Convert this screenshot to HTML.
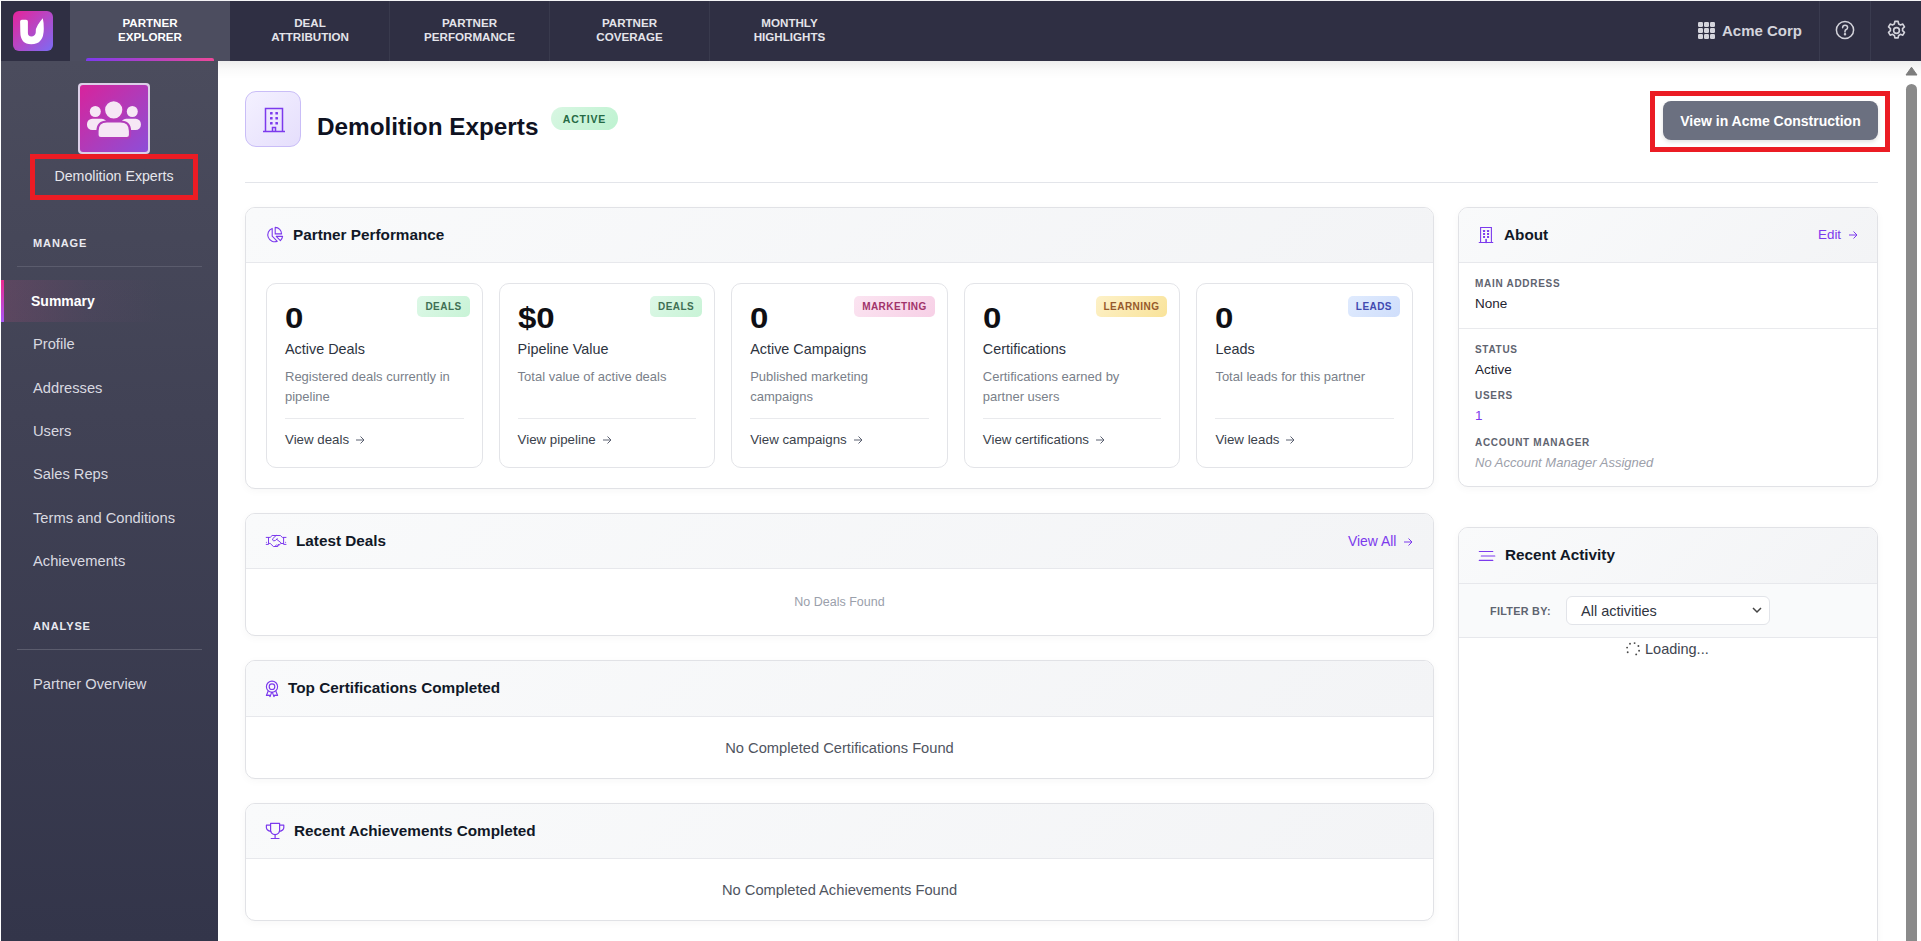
<!DOCTYPE html>
<html><head><meta charset="utf-8">
<style>
*{box-sizing:border-box;margin:0;padding:0}
html,body{width:1921px;height:941px;overflow:hidden;background:#fff;font-family:"Liberation Sans",sans-serif;position:relative}
.a{position:absolute}
.tab{position:absolute;top:1px;width:160px;height:60px;color:#e4e4ea;font-weight:bold;font-size:11.6px;line-height:14px;text-align:center;padding-top:15px}
.sep{border-left:1px solid #393a4d}
.nav{position:absolute;left:1px;width:217px;height:42px;color:#d9d9e0;font-size:14.7px;line-height:42px;padding-left:32px;white-space:nowrap}
.sect{position:absolute;left:33px;color:#eaeaf0;font-weight:bold;font-size:11px;letter-spacing:0.9px;line-height:14px}
.sdiv{position:absolute;left:17px;width:185px;height:1px;background:#5b5c6d}
.card{position:absolute;background:#fff;border:1px solid #e1e2e6;border-radius:10px;overflow:hidden;box-shadow:0 2px 8px rgba(0,0,0,0.035)}
.chd{position:absolute;left:0;top:0;right:0;height:55px;background:linear-gradient(135deg,#f9fafb 0%,#f3f4f6 100%);border-bottom:1px solid #e7e8ec}
.ct{position:absolute;top:0;line-height:54px;font-size:15.3px;font-weight:bold;color:#111827;white-space:nowrap}
.stat{position:absolute;top:75px;width:216.6px;height:185px;border:1px solid #e3e4e8;border-radius:10px;background:#fff}
.num{position:absolute;left:18px;top:17px;font-size:30px;font-weight:bold;color:#0f0f14;line-height:34px;transform:scaleX(1.1);transform-origin:0 0}
.bdg{position:absolute;right:12px;top:12px;height:21px;line-height:21px;padding:0 8px;border-radius:5px;font-size:10px;font-weight:bold;letter-spacing:0.45px}
.slab{position:absolute;left:18px;top:55px;font-size:14.4px;color:#2d3340;line-height:20px;white-space:nowrap}
.sdesc{position:absolute;left:18px;top:83px;width:190px;font-size:13px;color:#7a7f8a;line-height:20px}
.shr{position:absolute;left:18px;right:18px;top:134px;height:1px;background:#e9eaed}
.slink{position:absolute;left:18px;top:146px;font-size:13.3px;color:#3a3f4b;line-height:20px;white-space:nowrap}
.arr{display:inline-block;width:10px;height:10px;margin-left:6px;vertical-align:-1px}
.albl{position:absolute;left:16px;font-size:10px;font-weight:bold;letter-spacing:0.7px;color:#5f6470;line-height:14px}
.aval{position:absolute;left:16px;font-size:13.5px;color:#1f2430;line-height:18px}
.empty{position:absolute;left:0;right:0;text-align:center;white-space:nowrap}
</style></head><body>
<!-- page edge -->
<div class="a" style="left:0;top:0;width:1921px;height:1px;background:#f4f4f6"></div>
<!-- HEADER -->
<div class="a" style="left:1px;top:1px;width:1920px;height:60px;background:#2f2f43"></div>
<div class="a" style="left:13px;top:11px;width:40px;height:40px;border-radius:6px;background:linear-gradient(135deg,#e5239a 0%,#b548c6 50%,#7a6cf5 100%)">
  <svg width="40" height="40" viewBox="0 0 40 40"><path d="M7.1 10.5 q0 -1.8 1.8 -1.8 h4.2 q1.8 0 1.8 1.8 V22 q0 3.4 3.6 3.4 q3.2 0 4.2 -3.4 q-0.6 -4 2.2 -8.2 q2 -3.4 4.9 -6.6 q1 4 1 10.5 q0 15.6 -12.6 15.6 q-10.9 0 -10.9 -12.5 z" fill="#fff"/></svg>
</div>
<div class="tab" style="left:70px;background:#4c4d5f;color:#fff">PARTNER<br>EXPLORER</div>
<div class="tab" style="left:230px">DEAL<br>ATTRIBUTION</div>
<div class="tab sep" style="left:389px">PARTNER<br>PERFORMANCE</div>
<div class="tab sep" style="left:549px">PARTNER<br>COVERAGE</div>
<div class="tab sep" style="left:709px">MONTHLY<br>HIGHLIGHTS</div>
<div class="a" style="left:86px;top:58px;width:128px;height:3px;border-radius:2px 2px 0 0;background:linear-gradient(90deg,#7c3aed,#ec4899)"></div>
<!-- header right -->
<svg class="a" style="left:1698px;top:22px" width="17" height="17" viewBox="0 0 17 17" fill="#d4d4dc">
  <rect x="0" y="0" width="5" height="5" rx="1.2"/><rect x="6" y="0" width="5" height="5" rx="1.2"/><rect x="12" y="0" width="5" height="5" rx="1.2"/>
  <rect x="0" y="6" width="5" height="5" rx="1.2"/><rect x="6" y="6" width="5" height="5" rx="1.2"/><rect x="12" y="6" width="5" height="5" rx="1.2"/>
  <rect x="0" y="12" width="5" height="5" rx="1.2"/><rect x="6" y="12" width="5" height="5" rx="1.2"/><rect x="12" y="12" width="5" height="5" rx="1.2"/>
</svg>
<div class="a" style="left:1722px;top:22px;font-size:15px;font-weight:bold;color:#d4d4dc;line-height:18px">Acme Corp</div>
<div class="a" style="left:1819px;top:1px;width:1px;height:60px;background:#3a3b4f"></div>
<div class="a" style="left:1870px;top:1px;width:1px;height:60px;background:#3a3b4f"></div>
<svg class="a" style="left:1835px;top:20px" width="20" height="20" viewBox="0 0 20 20" fill="none" stroke="#d4d4dc" stroke-width="1.5">
  <circle cx="10" cy="10" r="8.6"/><path d="M7.6 7.8 q0 -2.6 2.5 -2.6 q2.5 0 2.5 2.3 q0 1.6 -1.7 2.3 q-0.9 0.4 -0.9 1.6 v0.5" stroke-linecap="round"/><circle cx="10" cy="14.3" r="0.5" fill="#d4d4dc"/>
</svg>
<svg class="a" style="left:1885px;top:19px" width="23" height="23" viewBox="0 0 24 24" fill="none" stroke="#d4d4dc" stroke-width="1.7" stroke-linejoin="round">
  <path d="M10.3 2.5h3.4l.5 2.6a7.5 7.5 0 0 1 1.9 1.1l2.5-.9 1.7 2.9-2 1.8a7.5 7.5 0 0 1 0 2.2l2 1.8-1.7 2.9-2.5-.9a7.5 7.5 0 0 1-1.9 1.1l-.5 2.6h-3.4l-.5-2.6a7.5 7.5 0 0 1-1.9-1.1l-2.5.9-1.7-2.9 2-1.8a7.5 7.5 0 0 1 0-2.2l-2-1.8 1.7-2.9 2.5.9a7.5 7.5 0 0 1 1.9-1.1z"/><circle cx="12" cy="12" r="3"/>
</svg>
<!-- SIDEBAR -->
<div class="a" style="left:1px;top:61px;width:217px;height:880px;background:linear-gradient(180deg,#4b4c5d 0%,#414255 40%,#33354a 100%)"></div>
<div class="a" style="left:78px;top:83px;width:72px;height:71px;border-radius:4px;background:#dcd0e8;padding:2px">
  <div style="width:68px;height:67px;border-radius:3px;background:linear-gradient(135deg,#d8239c 0%,#b13ab8 50%,#8d4ed8 100%)">
    <svg width="68" height="67" viewBox="0 0 68 67" fill="#f6e7f5">
      <circle cx="15.3" cy="26.5" r="5.5"/><circle cx="52.3" cy="26.5" r="5.5"/>
      <rect x="7" y="33.8" width="20" height="11.3" rx="5.2"/><rect x="40.9" y="33.8" width="20" height="11.3" rx="5.2"/>
      <circle cx="33.7" cy="24.8" r="9.6" stroke="#bb38b6" stroke-width="2"/>
      <path d="M17.5 53.2 V46 Q17.5 36.5 27 36.5 H40.5 Q50 36.5 50 46 V50 Q50 53.2 46.8 53.2 H20.7 Q17.5 53.2 17.5 50 Z" stroke="#b33cbb" stroke-width="2.2"/>
    </svg>
  </div>
</div>
<div class="a" style="left:30px;top:154px;width:168px;height:46px;border:5px solid #eb1c24"></div>
<div class="a" style="left:30px;top:167px;width:168px;text-align:center;font-size:14.2px;color:#e6e6ec;line-height:18px">Demolition Experts</div>
<div class="sect" style="top:236px">MANAGE</div>
<div class="sdiv" style="top:266px"></div>
<div class="a" style="left:1px;top:280px;width:217px;height:42px;background:linear-gradient(90deg,rgba(215,80,140,0.17) 0%,rgba(160,80,140,0.07) 40%,rgba(0,0,0,0) 75%)"></div>
<div class="a" style="left:1px;top:280px;width:3px;height:42px;background:linear-gradient(180deg,#ec2a8f,#a855f7)"></div>
<div class="nav" style="top:280px;padding-left:30px;color:#fff;font-weight:bold;font-size:14px">Summary</div>
<div class="nav" style="top:323px">Profile</div>
<div class="nav" style="top:367px">Addresses</div>
<div class="nav" style="top:410px">Users</div>
<div class="nav" style="top:453px">Sales Reps</div>
<div class="nav" style="top:497px">Terms and Conditions</div>
<div class="nav" style="top:540px">Achievements</div>
<div class="sect" style="top:619px">ANALYSE</div>
<div class="sdiv" style="top:649px"></div>
<div class="nav" style="top:663px">Partner Overview</div>
<!-- MAIN header shadow -->
<div class="a" style="left:218px;top:61px;width:1703px;height:18px;background:linear-gradient(180deg,rgba(0,0,0,0.07),rgba(0,0,0,0.02) 50%,rgba(0,0,0,0))"></div>
<!-- PAGE TITLE -->
<div class="a" style="left:245px;top:91px;width:56px;height:56px;border-radius:11px;border:1px solid #c9bdf7;background:linear-gradient(135deg,#f4f1ff,#e5defc)">
  <svg class="a" style="left:16px;top:15px" width="24" height="26" viewBox="0 0 24 26" fill="none" stroke="#7c3aed" stroke-width="1.5">
    <path d="M1 24.5 h22 M3.5 24.5 V1.5 h17 v23"/><path d="M10.5 24.5 v-4 h3 v4"/>
    <g fill="#7c3aed" stroke="none"><rect x="8" y="5" width="2.6" height="2.6" rx=".5"/><rect x="13.4" y="5" width="2.6" height="2.6" rx=".5"/><rect x="8" y="10" width="2.6" height="2.6" rx=".5"/><rect x="13.4" y="10" width="2.6" height="2.6" rx=".5"/><rect x="8" y="15" width="2.6" height="2.6" rx=".5"/><rect x="13.4" y="15" width="2.6" height="2.6" rx=".5"/></g>
  </svg>
</div>
<div class="a" style="left:317px;top:112px;font-size:24.3px;font-weight:bold;color:#0f1222;line-height:30px;white-space:nowrap">Demolition Experts</div>
<div class="a" style="left:551px;top:107px;width:67px;height:23px;border-radius:12px;background:linear-gradient(135deg,#d9f7e3,#bdf2d0);color:#256a45;font-size:10.5px;font-weight:bold;letter-spacing:0.8px;line-height:24px;text-align:center">ACTIVE</div>
<div class="a" style="left:1650px;top:91px;width:240px;height:61px;border:5px solid #eb1c24"></div>
<div class="a" style="left:1663px;top:101px;width:215px;height:39px;border-radius:8px;background:#6b7080;box-shadow:0 2px 4px rgba(0,0,0,0.12);color:#fff;font-size:14px;font-weight:bold;line-height:41px;text-align:center;white-space:nowrap">View in Acme Construction</div>
<div class="a" style="left:245px;top:182px;width:1633px;height:1px;background:#e3e5ea"></div>

<!-- PARTNER PERFORMANCE -->
<div class="card" style="left:245px;top:207px;width:1189px;height:282px">
  <div class="chd"></div>
  <svg class="a" style="left:9px;top:12px" width="40" height="30" viewBox="0 0 40 30" fill="none" stroke="#7c3aed" stroke-width="1.1" stroke-linejoin="round" stroke-linecap="round">
    <path d="M17.2 8.4 V16.2 L22.3 21.3 A6.9 6.9 0 1 1 17.2 8.4 Z"/><path d="M20.2 7.4 V13.9 H26.6 A6.5 6.5 0 0 0 20.2 7.4 Z"/><path d="M21.2 16.4 H27.6 Q27.2 19 25.4 20.6 Z"/>
  </svg>
  <div class="ct" style="left:47px">Partner Performance</div>
  <div class="stat" style="left:20px">
    <div class="num">0</div><div class="bdg" style="background:linear-gradient(135deg,#ddf8e7,#c8f3d6);color:#3f6f54">DEALS</div>
    <div class="slab">Active Deals</div><div class="sdesc">Registered deals currently in<br>pipeline</div>
    <div class="shr"></div><div class="slink">View deals<svg class="arr" viewBox="0 0 10 10" fill="none" stroke="#5b6070" stroke-width="1"><path d="M1 5h8M5.5 1.5L9 5l-3.5 3.5"/></svg></div>
  </div>
  <div class="stat" style="left:252.6px">
    <div class="num">$0</div><div class="bdg" style="background:linear-gradient(135deg,#ddf8e7,#c8f3d6);color:#3f6f54">DEALS</div>
    <div class="slab">Pipeline Value</div><div class="sdesc">Total value of active deals</div>
    <div class="shr"></div><div class="slink">View pipeline<svg class="arr" viewBox="0 0 10 10" fill="none" stroke="#5b6070" stroke-width="1"><path d="M1 5h8M5.5 1.5L9 5l-3.5 3.5"/></svg></div>
  </div>
  <div class="stat" style="left:485.2px">
    <div class="num">0</div><div class="bdg" style="background:linear-gradient(135deg,#fbe4f1,#f7d0e6);color:#a1336a">MARKETING</div>
    <div class="slab">Active Campaigns</div><div class="sdesc">Published marketing<br>campaigns</div>
    <div class="shr"></div><div class="slink">View campaigns<svg class="arr" viewBox="0 0 10 10" fill="none" stroke="#5b6070" stroke-width="1"><path d="M1 5h8M5.5 1.5L9 5l-3.5 3.5"/></svg></div>
  </div>
  <div class="stat" style="left:717.8px">
    <div class="num">0</div><div class="bdg" style="background:linear-gradient(135deg,#fdf1c8,#f9e39a);color:#965a2c">LEARNING</div>
    <div class="slab">Certifications</div><div class="sdesc">Certifications earned by<br>partner users</div>
    <div class="shr"></div><div class="slink">View certifications<svg class="arr" viewBox="0 0 10 10" fill="none" stroke="#5b6070" stroke-width="1"><path d="M1 5h8M5.5 1.5L9 5l-3.5 3.5"/></svg></div>
  </div>
  <div class="stat" style="left:950.4px">
    <div class="num">0</div><div class="bdg" style="background:linear-gradient(135deg,#e0ebfe,#cfdefb);color:#4149b0">LEADS</div>
    <div class="slab">Leads</div><div class="sdesc">Total leads for this partner</div>
    <div class="shr"></div><div class="slink">View leads<svg class="arr" viewBox="0 0 10 10" fill="none" stroke="#5b6070" stroke-width="1"><path d="M1 5h8M5.5 1.5L9 5l-3.5 3.5"/></svg></div>
  </div>
</div>

<!-- LATEST DEALS -->
<div class="card" style="left:245px;top:513px;width:1189px;height:123px">
  <div class="chd"></div>
  <svg class="a" style="left:14px;top:11px" width="40" height="30" viewBox="0 0 40 30" fill="none" stroke="#7c3aed" stroke-width="1.0" stroke-linejoin="round" stroke-linecap="round">
    <path d="M6.2 12.4 H10.2 L12.1 10.5 H20.4 L22.3 12.4 H26"/><path d="M8.5 12.4 V18.4 M23.6 12.4 V18.4"/><path d="M6.2 19.4 H8.5 V18.4 H10.2 L13.4 21.5 H17.8 L20.7 18.5 H23.6 V19.4 H26"/>
    <path d="M16 10.6 L12.8 13.6 Q11.9 15.4 13.8 15.9 Q15.2 16.1 17.4 13.8"/><path d="M16.8 14.4 L21 17.8"/><path d="M15.3 21.2 l1.2 -1.4 M17.5 20.5 l1.2 -1.3"/>
    <circle cx="6.4" cy="17.3" r=".55" fill="#7c3aed" stroke="none"/><circle cx="25.6" cy="17.3" r=".55" fill="#7c3aed" stroke="none"/>
  </svg>
  <div class="ct" style="left:50px">Latest Deals</div>
  <div class="a" style="left:1102px;top:18px;font-size:13.9px;color:#7c3aed;line-height:18px;white-space:nowrap">View All<svg class="arr" style="margin-left:7px" viewBox="0 0 10 10" fill="none" stroke="#7c3aed" stroke-width="1"><path d="M1 5h8M5.5 1.5L9 5l-3.5 3.5"/></svg></div>
  <div class="empty" style="top:80px;font-size:12.5px;color:#9aa0ab;line-height:16px">No Deals Found</div>
</div>

<!-- TOP CERTS -->
<div class="card" style="left:245px;top:660px;width:1189px;height:119px">
  <div class="chd" style="height:56px"></div>
  <svg class="a" style="left:12px;top:11px" width="40" height="30" viewBox="0 0 40 30" fill="none" stroke="#7c3aed" stroke-width="1.15" stroke-linejoin="round" stroke-linecap="round">
    <circle cx="14" cy="14.7" r="5.6"/><circle cx="14" cy="14.7" r="2.8"/><path d="M10.2 19 L8.4 23.5 L11.2 23.1 L12.1 24.6 L13.6 20.4"/><path d="M17.8 19 L19.6 23.5 L16.8 23.1 L15.9 24.6 L14.4 20.4"/>
  </svg>
  <div class="ct" style="left:42px">Top Certifications Completed</div>
  <div class="empty" style="top:78px;font-size:14.7px;color:#50555f;line-height:18px">No Completed Certifications Found</div>
</div>

<!-- ACHIEVEMENTS -->
<div class="card" style="left:245px;top:803px;width:1189px;height:118px">
  <div class="chd"></div>
  <svg class="a" style="left:12px;top:11px" width="40" height="30" viewBox="0 0 40 30" fill="none" stroke="#7c3aed" stroke-width="1.2" stroke-linejoin="round" stroke-linecap="round">
    <path d="M12.6 8.4 H21.6 V15.5 Q21.2 19.4 17.1 19.6 Q13 19.4 12.6 15.5 Z"/><path d="M12.5 10.2 H8.4 V12.6 Q8.6 15.6 12.8 16.4"/><path d="M21.7 10.2 H25.8 V12.6 Q25.6 15.6 21.4 16.4"/><path d="M17.1 19.8 V23.4 M13.2 23.5 H21"/>
  </svg>
  <div class="ct" style="left:48px">Recent Achievements Completed</div>
  <div class="empty" style="top:77px;font-size:14.7px;color:#50555f;line-height:18px">No Completed Achievements Found</div>
</div>

<!-- ABOUT -->
<div class="card" style="left:1458px;top:207px;width:420px;height:280px">
  <div class="chd"></div>
  <svg class="a" style="left:11px;top:12px" width="40" height="30" viewBox="0 0 40 30" fill="none" stroke="#7c3aed" stroke-width="1.1" stroke-linecap="round">
    <path d="M9.2 22.5 H22.8 M10.6 22.5 V7.5 H21.4 V22.5"/><path d="M16.1 19.5 V22.5" stroke-width="1.6"/>
    <g fill="#7c3aed" stroke="none"><rect x="13" y="10" width="2.1" height="2.1" rx=".4"/><rect x="17" y="10" width="2.1" height="2.1" rx=".4"/><rect x="13" y="12.9" width="2.1" height="2.1" rx=".4"/><rect x="17" y="12.9" width="2.1" height="2.1" rx=".4"/><rect x="13" y="15.9" width="2.1" height="2.1" rx=".4"/><rect x="17" y="15.9" width="2.1" height="2.1" rx=".4"/></g>
  </svg>
  <div class="ct" style="left:45px">About</div>
  <div class="a" style="left:359px;top:18px;font-size:13.4px;color:#7c3aed;line-height:18px;white-space:nowrap">Edit<svg class="arr" style="margin-left:7px" viewBox="0 0 10 10" fill="none" stroke="#7c3aed" stroke-width="1"><path d="M1 5h8M5.5 1.5L9 5l-3.5 3.5"/></svg></div>
  <div class="albl" style="top:69px">MAIN ADDRESS</div>
  <div class="aval" style="top:87px">None</div>
  <div class="a" style="left:0;right:0;top:120px;height:1px;background:#e9eaed"></div>
  <div class="albl" style="top:135px">STATUS</div>
  <div class="aval" style="top:153px">Active</div>
  <div class="albl" style="top:181px">USERS</div>
  <div class="aval" style="top:199px;color:#7c3aed">1</div>
  <div class="albl" style="top:228px">ACCOUNT MANAGER</div>
  <div class="aval" style="top:246px;font-style:italic;color:#9ca0aa;font-size:13px">No Account Manager Assigned</div>
</div>

<!-- RECENT ACTIVITY -->
<div class="card" style="left:1458px;top:527px;width:420px;height:440px">
  <div class="chd" style="height:56px"></div>
  <svg class="a" style="left:11px;top:12px" width="40" height="30" viewBox="0 0 40 30" fill="none" stroke="#7c3aed" stroke-width="1.15" stroke-linecap="round">
    <path d="M9.3 11.5 H22.8 M11.3 16 H24.8 M9.3 20.4 H22.8"/>
  </svg>
  <div class="ct" style="left:46px">Recent Activity</div>
  <div class="a" style="left:0;right:0;top:56px;height:54px;background:#f9fafb;border-bottom:1px solid #e7e8ec"></div>
  <div class="a" style="left:31px;top:76px;font-size:10.8px;font-weight:bold;letter-spacing:0.3px;color:#5f6470;line-height:14px">FILTER BY:</div>
  <div class="a" style="left:107px;top:68px;width:204px;height:29px;border:1px solid #e2e4e9;border-radius:6px;background:#fff">
    <div class="a" style="left:14px;top:5px;font-size:14.5px;color:#2f3440;line-height:18px">All activities</div>
    <svg class="a" style="left:185px;top:10px" width="10" height="7" viewBox="0 0 10 7" fill="none" stroke="#444" stroke-width="1.5"><path d="M1 1l4 4 4-4"/></svg>
  </div>
  <svg class="a" style="left:156px;top:107px" width="40" height="30" viewBox="0 0 40 30" fill="#4a4a4a">
    <circle cx="15" cy="8.8" r=".95"/><circle cx="19.6" cy="8.1" r=".95"/><circle cx="23.4" cy="11" r=".95"/><circle cx="24.1" cy="15.8" r=".95"/><circle cx="21.2" cy="19.4" r=".95"/><circle cx="12.7" cy="17.2" r=".95"/><circle cx="12.1" cy="12.6" r=".95"/>
  </svg>
  <div class="a" style="left:186px;top:112px;font-size:14.5px;color:#40454f;line-height:18px">Loading...</div>
</div>

<!-- SCROLLBAR -->
<svg class="a" style="left:1905px;top:66px" width="13" height="10" viewBox="0 0 13 10"><path d="M6.5 1.2 L12 9 H1 Z" fill="#7d7d7d" stroke="#7d7d7d" stroke-linejoin="round"/></svg>
<div class="a" style="left:1906px;top:84px;width:11px;height:870px;border-radius:6px;background:#8a8a8a"></div>
</body></html>
